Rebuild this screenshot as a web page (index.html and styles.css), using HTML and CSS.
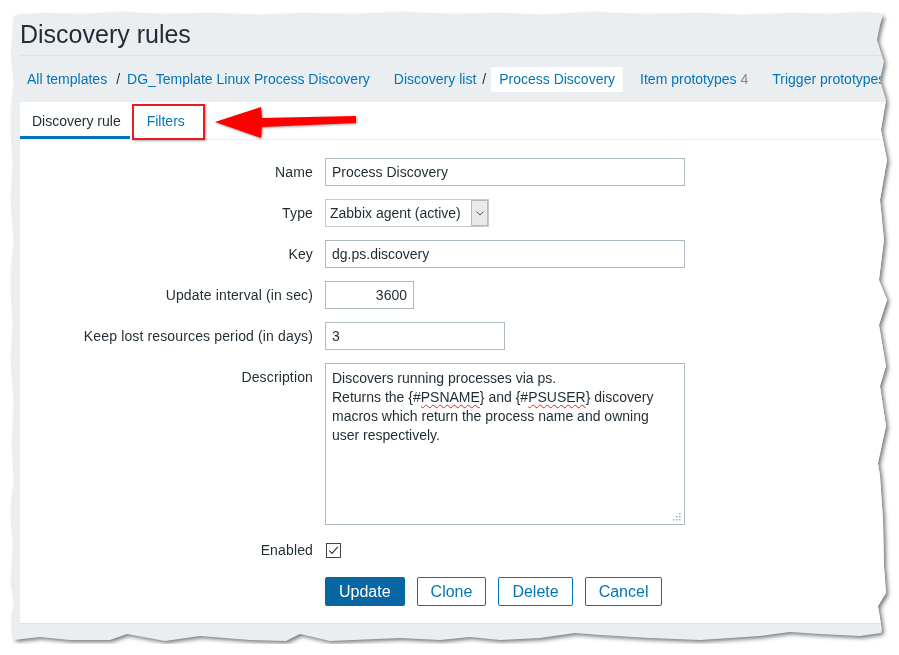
FILE: index.html
```html
<!DOCTYPE html>
<html lang="en">
<head>
  <meta charset="UTF-8" />
  <title>Discovery rules</title>
  <link rel="stylesheet" href="styles.css">
</head>
<body>
  <div class="frame">
    <div class="shot">
      <h1 class="page-title">Discovery rules</h1>

      <nav class="breadcrumbs">
        <ul class="crumbs">
          <li><a href="#">All templates</a></li>
          <li class="sep">/</li>
          <li><a href="#">DG_Template Linux Process Discovery</a></li>
        </ul>
        <ul class="crumbs">
          <li><a href="#">Discovery list</a></li>
          <li class="sep sep-tight">/</li>
          <li class="current"><a href="#">Process Discovery</a></li>
        </ul>
        <ul class="crumbs">
          <li><a href="#">Item prototypes</a> <span class="count">4</span></li>
        </ul>
        <ul class="crumbs">
          <li><a href="#">Trigger prototypes</a></li>
        </ul>
      </nav>

      <div class="content">
        <div class="tabs">
          <div class="tab active">Discovery rule</div>
          <div class="tab"><a href="#">Filters</a></div>

          <!-- annotation over the tabs -->
          <span class="highlight"></span>
          <svg class="arrow" width="160" height="40" viewBox="0 0 160 40">
            <polygon points="5,20 51,5 52,16 146,14 146,21 52,25 51,36" fill="#ff0000"/>
          </svg>
        </div>

        <form class="rule-form">
          <label class="field-label" for="name">Name</label>
          <input class="field w-wide" id="name" type="text" value="Process Discovery">

          <label class="field-label">Type</label>
          <div class="select">
            <span class="select-value">Zabbix agent (active)</span>
            <span class="select-btn">
              <svg width="8" height="5" viewBox="0 0 8 5"><path d="M0.5 0.8 L4 4 L7.5 0.8" fill="none" stroke="#555" stroke-width="1"/></svg>
            </span>
          </div>

          <label class="field-label" for="key">Key</label>
          <input class="field w-wide" id="key" type="text" value="dg.ps.discovery">

          <label class="field-label" for="delay">Update interval (in sec)</label>
          <input class="field w-small num" id="delay" type="text" value="3600">

          <label class="field-label" for="lifetime">Keep lost resources period (in days)</label>
          <input class="field w-mid" id="lifetime" type="text" value="3">

          <label class="field-label">Description</label>
          <div class="textarea">
            Discovers running processes via ps.<br>
            Returns the {#<span class="typo">PSNAME</span>} and {#<span class="typo">PSUSER</span>} discovery<br>
            macros which return the process name and owning<br>
            user respectively.
            <svg class="grip" width="8" height="8" viewBox="0 0 8 8">
              <rect x="6" y="0" width="1.5" height="1.5" fill="#aaa"/>
              <rect x="3" y="3" width="1.5" height="1.5" fill="#aaa"/>
              <rect x="6" y="3" width="1.5" height="1.5" fill="#aaa"/>
              <rect x="0" y="6" width="1.5" height="1.5" fill="#aaa"/>
              <rect x="3" y="6" width="1.5" height="1.5" fill="#aaa"/>
              <rect x="6" y="6" width="1.5" height="1.5" fill="#aaa"/>
            </svg>
          </div>

          <label class="field-label short">Enabled</label>
          <div class="check-row">
            <svg width="15" height="15" viewBox="0 0 15 15">
              <rect x="0.5" y="0.5" width="14" height="14" fill="#fff" stroke="#444"/>
              <path d="M3.2 7.6 L6 10.4 L11.8 3.8" fill="none" stroke="#333" stroke-width="1.1"/>
            </svg>
          </div>

          <div class="actions">
            <button type="button" class="btn primary">Update</button>
            <button type="button" class="btn">Clone</button>
            <button type="button" class="btn">Delete</button>
            <button type="button" class="btn">Cancel</button>
          </div>
        </form>
      </div>
    </div>
  </div>
</body>
</html>
```

FILE: styles.css
```css
:root {
  --bg-gray: #ebeef0;
  --line: #dde2e5;
  --text-dark: #1f2c33;
  --link: #0275b8;
  --btn-blue: #0866a2;
  --input-border: #acbbc2;
}

* { box-sizing: border-box; }

body {
  margin: 0;
  padding: 12px 0 0 12px;
  background: #fff;
  font-family: "Liberation Sans", Arial, sans-serif;
  font-size: 14px;
  color: var(--text-dark);
}

a { color: var(--link); text-decoration: none; }

/* torn screenshot edge */
.frame {
  width: 876px;
  height: 632px;
  filter: drop-shadow(2px 2px 2px rgba(0,0,0,0.55));
}
.shot {
  width: 876px;
  height: 632px;
  padding-left: 8px;
  background: var(--bg-gray);
  overflow: hidden;
  clip-path: polygon(
    2px 4px, 28px 2px, 68px 3px, 108px 1px, 148px 3px, 198px 2px, 248px 4px, 288px 2px,
    338px 3px, 388px 1px, 438px 3px, 488px 2px, 528px 4px, 578px 1px, 628px 3px, 688px 2px,
    728px 4px, 778px 2px, 818px 3px, 848px 1px, 871px 3px,
    868px 13px, 865px 28px, 872px 50px, 868px 68px, 874px 88px, 869px 118px, 875px 148px,
    868px 188px, 872px 228px, 867px 268px, 875px 288px, 867px 313px, 874px 354px, 868px 374px,
    874px 414px, 866px 451px, 868px 464px, 871px 508px, 872px 554px, 874px 581px, 866px 594px,
    870px 618px, 869px 621px,
    848px 624px, 808px 622px, 778px 620px, 748px 624px, 688px 628px, 638px 626px, 588px 623px,
    563px 621px, 528px 626px, 488px 628px, 458px 625px, 428px 628px, 388px 626px, 318px 629px,
    288px 622px, 274px 629px, 238px 628px, 188px 624px, 153px 629px, 115px 622px, 98px 628px,
    58px 628px, 28px 625px, 2px 628px,
    0px 608px, 3px 588px, 0px 568px, 2px 528px, -1px 498px, 3px 468px, 1px 428px, 3px 388px,
    0px 348px, 2px 308px, -1px 268px, 3px 228px, 0px 188px, 2px 148px, -1px 108px, 3px 68px,
    0px 38px, 2px 18px
  );
}

.page-title {
  margin: 0;
  padding: 7px 0 6px;
  font-size: 25px;
  line-height: 30px;
  font-weight: normal;
  color: var(--text-dark);
  border-bottom: 1px solid var(--line);
}

.breadcrumbs {
  display: flex;
  align-items: center;
  gap: 24px;
  height: 46px;
  padding-left: 7px;
  white-space: nowrap;
}
.crumbs {
  display: flex;
  align-items: center;
  margin: 0;
  padding: 0;
  list-style: none;
}
.crumbs .sep { margin: 0 7px 0 9px; color: var(--text-dark); }
.crumbs .sep-tight { margin: 0 5px 0 6px; }
.crumbs .current {
  background: #fff;
  border-radius: 2px;
  height: 25px;
  line-height: 25px;
  padding: 0 8px;
  margin-right: -7px;
}
.count { color: #768d99; }

.content {
  background: #fff;
  border-bottom: 1px solid var(--line);
  padding-bottom: 17px;
}

.tabs {
  position: relative;
  display: flex;
  height: 38px;
  border-bottom: 1px solid var(--bg-gray);
}
.tab {
  height: 37px;
  line-height: 38px;
  padding: 0 12px;
}
.tab.active {
  padding: 0 9px 0 12px;
  color: var(--text-dark);
  box-shadow: inset 0 -3px 0 var(--link);
}
.tab + .tab { margin-left: 5px; }

.highlight {
  position: absolute;
  left: 112px;
  top: 2px;
  width: 73px;
  height: 36px;
  border: 2px solid #e81c1c;
  box-shadow: 1px 1px 2px rgba(0,0,0,0.35);
}
.arrow {
  position: absolute;
  left: 190px;
  top: 0;
  filter: drop-shadow(1px 1px 1px rgba(0,0,0,0.4));
}

.rule-form {
  display: grid;
  grid-template-columns: 293px 1fr;
  column-gap: 12px;
  row-gap: 13px;
  align-items: start;
  justify-items: start;
  padding-top: 18px;
}
.field-label {
  justify-self: end;
  line-height: 28px;
  letter-spacing: 0.14px;
  color: var(--text-dark);
}
.field-label.short { line-height: 24px; }

.field {
  height: 28px;
  padding: 0 6px;
  border: 1px solid var(--input-border);
  border-radius: 0;
  font: 14px "Liberation Sans", Arial, sans-serif;
  color: var(--text-dark);
  background: #fff;
}
.field.num { text-align: right; }
.w-wide { width: 360px; }
.w-mid { width: 180px; }
.w-small { width: 89px; }

.select {
  display: flex;
  align-items: center;
  width: 164px;
  height: 28px;
  border: 1px solid #c4cbd0;
  background: #fff;
}
.select-value { flex: 1; padding-left: 4px; white-space: nowrap; }
.select-btn {
  display: flex;
  align-items: center;
  justify-content: center;
  width: 17px;
  height: 26px;
  background: #e9e9e9;
  border: 1px solid #b9b9b9;
}

.textarea {
  position: relative;
  width: 360px;
  height: 162px;
  padding: 5px 6px;
  border: 1px solid var(--input-border);
  line-height: 19px;
  white-space: nowrap;
}
.typo {
  text-decoration: underline wavy #e02424;
  text-decoration-thickness: 1px;
  text-underline-offset: 2px;
}
.grip { position: absolute; right: 3px; bottom: 3px; }

.check-row {
  display: flex;
  align-items: center;
  height: 24px;
  padding-left: 1px;
}

.actions {
  grid-column: 2;
  display: flex;
  gap: 12px;
  margin-top: 2px;
}
.btn {
  height: 29px;
  padding: 0 13px;
  border: 1px solid var(--link);
  border-radius: 2px;
  background: #fff;
  color: var(--link);
  font: 16px "Liberation Sans", Arial, sans-serif;
  cursor: pointer;
}
.btn.primary {
  background: var(--btn-blue);
  border-color: var(--btn-blue);
  color: #fff;
}
```
